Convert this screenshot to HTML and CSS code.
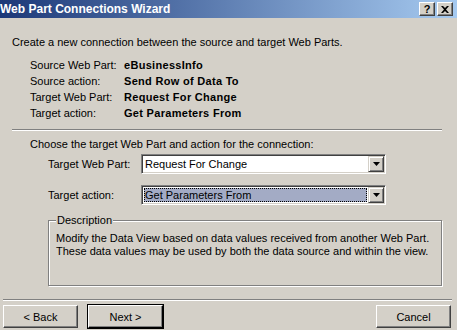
FILE: index.html
```html
<!DOCTYPE html>
<html lang="en-us">
  <head>
    <meta charset="utf-8">
    <title>Web Part Connections Wizard</title>
    <link rel="stylesheet" href="styles.css">
  </head>
  <body>
    <div class="wizard">
      <div class="titlebar">
        <span class="title">Web Part Connections Wizard</span>
        <div class="caption-buttons">
          <span class="cap-btn">?</span>
          <span class="cap-btn">
            <svg width="8" height="7" viewBox="0 0 8 7"><path d="M0 0h2l2 2 2-2h2L5 3.5 8 7H6L4 5 2 7H0l3-3.5z" fill="#000"/></svg>
          </span>
        </div>
      </div>

      <div class="body">
        <p class="intro">Create a new connection between the source and target Web Parts.</p>

        <div class="summary">
          <span class="label">Source Web Part:</span><b>eBusinessInfo</b>
          <span class="label">Source action:</span><b>Send Row of Data To</b>
          <span class="label">Target Web Part:</span><b>Request For Change</b>
          <span class="label">Target action:</span><b>Get Parameters From</b>
        </div>

        <div class="etched"></div>

        <p class="choose">Choose the target Web Part and action for the connection:</p>

        <div class="field">
          <span class="field-label">Target Web Part:</span>
          <div class="combo">
            <span class="combo-value">Request For Change</span>
            <span class="combo-arrow"><svg width="7" height="4" viewBox="0 0 7 4"><path d="M0 0h7L3.5 4z" fill="#000"/></svg></span>
          </div>
        </div>

        <div class="field">
          <span class="field-label">Target action:</span>
          <div class="combo">
            <span class="combo-value selected">Get Parameters From</span>
            <span class="combo-arrow"><svg width="7" height="4" viewBox="0 0 7 4"><path d="M0 0h7L3.5 4z" fill="#000"/></svg></span>
          </div>
        </div>

        <fieldset class="groupbox">
          <legend>Description</legend>
          <p>Modify the Data View based on data values received from another Web Part.<br>These data values may be used by both the data source and within the view.</p>
        </fieldset>
      </div>

      <div class="etched bottom"></div>

      <div class="buttons">
        <button class="btn">&lt; Back</button>
        <button class="btn default">Next &gt;</button>
        <span class="spacer"></span>
        <button class="btn">Cancel</button>
      </div>
    </div>
  </body>
</html>
```

FILE: styles.css
```css
body {
  margin: 0;
  background: #d4d0c8;
}
.wizard {
  width: 457px;
  height: 330px;
  overflow: hidden;
  background: #d4d0c8;
  font-family: "Liberation Sans", Arial, sans-serif;
  font-size: 11px;
  color: #000;
}
.titlebar {
  height: 18px;
  display: flex;
  align-items: center;
  background: linear-gradient(to right, #1c3878, #a6caf0);
}
.title {
  color: #fff;
  font-weight: bold;
  font-size: 12px;
  flex: 1;
}
.caption-buttons {
  display: flex;
  gap: 2px;
  margin-right: 4px;
}
.cap-btn {
  width: 16px;
  height: 14px;
  box-sizing: border-box;
  background: #d4d0c8;
  border: 1px solid;
  border-color: #fff #404040 #404040 #fff;
  box-shadow: inset -1px -1px #808080;
  display: flex;
  align-items: center;
  justify-content: center;
  font-weight: bold;
  font-size: 11px;
  line-height: 1;
}
.body {
  padding: 0 15px 0 12px;
}
p {
  margin: 0;
}
.intro {
  padding-top: 18px;
  line-height: 13px;
}
.summary {
  display: grid;
  grid-template-columns: 94px auto;
  grid-auto-rows: 16px;
  align-items: center;
  margin: 8px 0 0 18px;
}
.summary b {
  letter-spacing: 0.3px;
}
.etched {
  height: 0;
  border-top: 1px solid #808080;
  border-bottom: 1px solid #fff;
  margin-top: 8px;
}
.choose {
  margin: 6px 0 0 18px;
  line-height: 14px;
}
.field {
  display: flex;
  align-items: center;
  margin: 3px 0 0 36px;
}
.field + .field {
  margin-top: 11px;
}
.field-label {
  width: 93px;
}
.combo {
  width: 245px;
  height: 20px;
  box-sizing: border-box;
  background: #fff;
  border: 1px solid;
  border-color: #808080 #fff #fff #808080;
  box-shadow: inset 1px 1px #404040, inset -1px -1px #d4d0c8;
  display: flex;
  padding: 2px;
}
.combo-value {
  flex: 1;
  line-height: 14px;
  padding-left: 1px;
}
.combo-value.selected {
  background: #a3abc5;
  outline: 1px dotted #000;
  outline-offset: -1px;
  margin-right: 1px;
}
.combo-arrow {
  width: 16px;
  height: 16px;
  margin: -1px -1px 0 0;
  box-sizing: border-box;
  background: #d4d0c8;
  border: 1px solid;
  border-color: #d4d0c8 #404040 #404040 #d4d0c8;
  box-shadow: inset 1px 1px #fff, inset -1px -1px #808080;
  display: flex;
  align-items: center;
  justify-content: center;
}
.groupbox {
  margin: 9px 0 0 36px;
  padding: 5px 8px 0 7px;
  height: 72px;
  box-sizing: border-box;
  border: 1px solid #808080;
  box-shadow: inset 1px 1px #fff, 1px 1px #fff;
}
.groupbox legend {
  padding: 0 1px;
  margin-left: 0;
  background: #d4d0c8;
  line-height: 13px;
}
.groupbox p {
  line-height: 13px;
}
.etched.bottom {
  margin: 13px 5px 0 3px;
}
.buttons {
  display: flex;
  gap: 10px;
  padding: 4px 6px 0 3px;
}
.spacer {
  flex: 1;
}
.btn {
  width: 75px;
  height: 23px;
  box-sizing: border-box;
  font: inherit;
  color: #000;
  background: #d4d0c8;
  border: 1px solid;
  border-color: #fff #404040 #404040 #fff;
  box-shadow: inset -1px -1px #808080;
  padding: 0;
}
.btn.default {
  outline: 1px solid #000;
  outline-offset: 0;
  border-color: #fff #000 #000 #fff;
}
```
